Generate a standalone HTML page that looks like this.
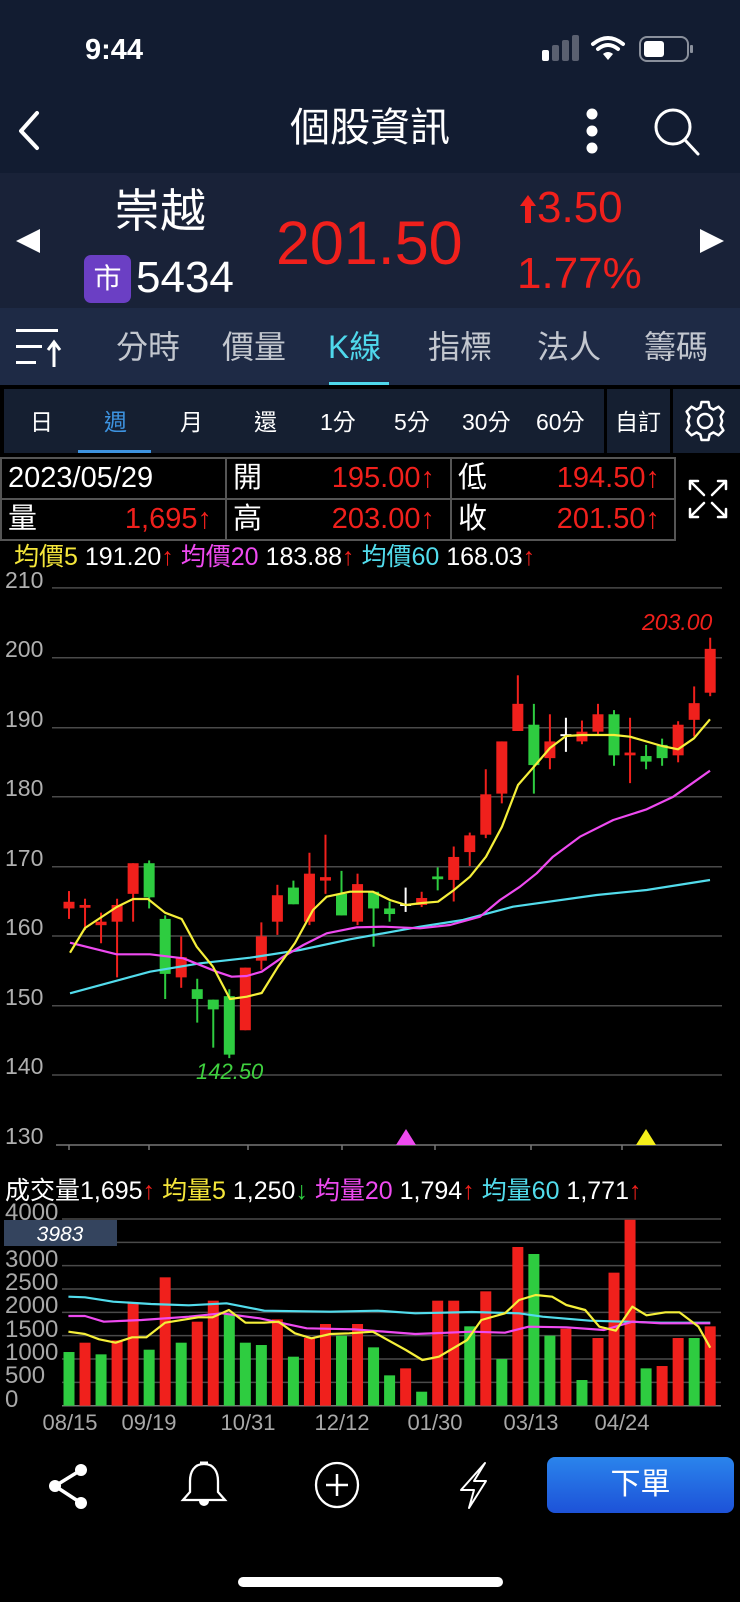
<!DOCTYPE html>
<html><head><meta charset="utf-8">
<style>
*{margin:0;padding:0;box-sizing:border-box}
body{width:740px;height:1602px;background:#000;overflow:hidden;font-family:"Liberation Sans","Noto Sans CJK TC",sans-serif;color:#fff;position:relative}
.a{position:absolute;white-space:nowrap}
.red{color:#f0201c}
</style></head><body>
<div class="a" style="left:0;top:0;width:740px;height:173px;background:#121c31"></div>
<div class="a" style="left:85px;top:34px;font-size:29px;font-weight:bold;line-height:32px">9:44</div>
<svg class="a" style="left:530px;top:30px" width="180" height="40">
<rect x="12" y="20" width="7" height="11" rx="2" fill="#fff"/>
<rect x="22" y="15" width="7" height="16" rx="2" fill="#5a6070"/>
<rect x="32" y="10" width="7" height="21" rx="2" fill="#5a6070"/>
<rect x="42" y="5" width="7" height="26" rx="2" fill="#5a6070"/>
<path d="M63 14 Q78 2 93 14" stroke="#fff" stroke-width="4" fill="none" stroke-linecap="round"/>
<path d="M68 19 Q78 11 88 19" stroke="#fff" stroke-width="4" fill="none" stroke-linecap="round"/>
<path d="M73 24 L78 30 L83 24 Q78 20 73 24Z" fill="#fff"/>
<rect x="110" y="7" width="48" height="24" rx="7" fill="none" stroke="#8a909c" stroke-width="2"/>
<rect x="114" y="11" width="20" height="16" rx="3" fill="#fff"/>
<rect x="160" y="15" width="3" height="8" rx="1" fill="#8a909c"/>
</svg>
<svg class="a" style="left:0;top:100px" width="740" height="60">
<path d="M37 13 L21 31 L37 48" stroke="#fff" stroke-width="4" fill="none" stroke-linecap="round" stroke-linejoin="round"/>
<circle cx="592" cy="14" r="5.5" fill="#fff"/><circle cx="592" cy="31" r="5.5" fill="#fff"/><circle cx="592" cy="48" r="5.5" fill="#fff"/>
<circle cx="673" cy="27" r="17" stroke="#fff" stroke-width="3" fill="none"/>
<path d="M685 40 L698 54" stroke="#fff" stroke-width="3" stroke-linecap="round"/>
</svg>
<div class="a" style="left:270px;top:104px;width:200px;text-align:center;font-size:40px;line-height:48px">個股資訊</div>
<div class="a" style="left:0;top:173px;width:740px;height:135px;background:#192238"></div>
<svg class="a" style="left:0;top:225px" width="740" height="32">
<path d="M16 16 L40 4 L40 28Z" fill="#fff"/><path d="M724 16 L700 4 L700 28Z" fill="#fff"/></svg>
<div class="a" style="left:114px;top:183px;font-size:46px;line-height:56px">崇越</div>
<div class="a" style="left:84px;top:255px;width:47px;height:48px;background:#6b3fc4;border-radius:7px;text-align:center;font-size:28px;line-height:48px">市</div>
<div class="a" style="left:136px;top:254px;font-size:44px;line-height:48px">5434</div>
<div class="a red" style="left:276px;top:210px;font-size:61px;line-height:66px">201.50</div>
<svg class="a" style="left:519px;top:194px" width="18" height="30"><path d="M9 1 L17 12 L12 12 L12 29 L6 29 L6 12 L1 12Z" fill="#f0201c"/></svg>
<div class="a red" style="left:537px;top:184px;font-size:44px;line-height:48px">3.50</div>
<div class="a red" style="left:517px;top:250px;font-size:44px;line-height:48px">1.77%</div>
<div class="a" style="left:0;top:308px;width:740px;height:77px;background:#1e2a45"></div>
<svg class="a" style="left:14px;top:325px" width="50" height="45">
<rect x="2" y="4" width="42" height="3" fill="#fff"/><rect x="2" y="20" width="26" height="3" fill="#fff"/><rect x="2" y="36" width="20" height="3" fill="#fff"/>
<path d="M40 42 L40 18 M34 25 L40 17 L46 25" stroke="#fff" stroke-width="3" fill="none"/></svg>
<div class="a" style="left:116px;top:328px;font-size:32px;line-height:38px;color:#c3c7cf">分時</div>
<div class="a" style="left:222px;top:328px;font-size:32px;line-height:38px;color:#c3c7cf">價量</div>
<div class="a" style="left:328px;top:328px;font-size:32px;line-height:38px;color:#4fd8ec">K線</div>
<div class="a" style="left:428px;top:328px;font-size:32px;line-height:38px;color:#c3c7cf">指標</div>
<div class="a" style="left:537px;top:328px;font-size:32px;line-height:38px;color:#c3c7cf">法人</div>
<div class="a" style="left:644px;top:328px;font-size:32px;line-height:38px;color:#c3c7cf">籌碼</div>
<div class="a" style="left:329px;top:382px;width:60px;height:3px;background:#4fd8ec"></div>
<div class="a" style="left:4px;top:389px;width:600px;height:64px;background:#151f31"></div>
<div class="a" style="left:607px;top:389px;width:63px;height:64px;background:#151f31"></div>
<div class="a" style="left:673px;top:389px;width:67px;height:64px;background:#151f31"></div>
<div class="a" style="top:407px;left:0;width:740px;font-size:23px;line-height:30px">
<span class="a" style="left:30px">日</span><span class="a" style="left:104px;color:#3d93e0">週</span><span class="a" style="left:180px">月</span><span class="a" style="left:254px">還</span><span class="a" style="left:320px">1分</span><span class="a" style="left:394px">5分</span><span class="a" style="left:462px">30分</span><span class="a" style="left:536px">60分</span><span class="a" style="left:615px">自訂</span></div>
<div class="a" style="left:78px;top:450px;width:73px;height:3px;background:#3d93e0"></div>
<svg class="a" style="left:683px;top:399px" width="44" height="44" viewBox="-22 -22 44 44">
<path d="M-3.5 -19 L3.5 -19 L4.6 -13.5 L8.5 -11.4 L13.5 -14.3 L18.4 -9.4 L15.6 -4.5 L17 -0.5 L17 0.5 L15.6 4.5 L18.4 9.4 L13.5 14.3 L8.5 11.4 L4.6 13.5 L3.5 19 L-3.5 19 L-4.6 13.5 L-8.5 11.4 L-13.5 14.3 L-18.4 9.4 L-15.6 4.5 L-17 0 L-15.6 -4.5 L-18.4 -9.4 L-13.5 -14.3 L-8.5 -11.4 L-4.6 -13.5Z" fill="none" stroke="#fff" stroke-width="2.5" stroke-linejoin="round"/>
<circle r="7" fill="none" stroke="#fff" stroke-width="2.5"/></svg>
<svg class="a" style="left:0;top:457px" width="740" height="85">
<g stroke="#555" stroke-width="2" fill="none"><rect x="1" y="1" width="674" height="82"/><line x1="1" y1="42" x2="675" y2="42"/><line x1="226" y1="1" x2="226" y2="83"/><line x1="451" y1="1" x2="451" y2="83"/></g>
<g stroke="#fff" stroke-width="2.5" fill="none" stroke-linecap="round"><path d="M690 24 L704 38 M690 24 L690 32 M690 24 L698 24"/><path d="M726 24 L712 38 M726 24 L726 32 M726 24 L718 24"/><path d="M690 60 L704 46 M690 60 L690 52 M690 60 L698 60"/><path d="M726 60 L712 46 M726 60 L726 52 M726 60 L718 60"/></g>
</svg>
<div class="a" style="top:461px;left:0;font-size:29px;line-height:34px;width:740px">
<span class="a" style="left:8px">2023/05/29</span><span class="a" style="left:233px">開</span><span class="a red" style="right:305px">195.00↑</span><span class="a" style="left:458px">低</span><span class="a red" style="right:80px">194.50↑</span></div>
<div class="a" style="top:502px;left:0;font-size:29px;line-height:34px;width:740px">
<span class="a" style="left:8px">量</span><span class="a red" style="right:528px">1,695↑</span><span class="a" style="left:233px">高</span><span class="a red" style="right:305px">203.00↑</span><span class="a" style="left:458px">收</span><span class="a red" style="right:80px">201.50↑</span></div>
<div class="a" style="left:14px;top:543px;font-size:25px;line-height:28px"><span style="color:#f5e63a">均價5</span> 191.20<span class="red">↑</span> <span style="color:#ee4af0">均價20</span> 183.88<span class="red">↑</span> <span style="color:#52dcec">均價60</span> 168.03<span class="red">↑</span></div>
<div class="a" style="left:5px;top:1176px;font-size:25px;line-height:30px">成交量1,695<span class="red">↑</span> <span style="color:#f5e63a">均量5</span> 1,250<span style="color:#2ecc40">↓</span> <span style="color:#ee4af0">均量20</span> 1,794<span class="red">↑</span> <span style="color:#52dcec">均量60</span> 1,771<span class="red">↑</span></div>
<svg id="ch" class="a" style="left:0;top:0" width="740" height="1602">
<g font-family="Liberation Sans,sans-serif" font-size="23" fill="#b0b0b0">
<text x="5" y="588">210</text><text x="5" y="657">200</text><text x="5" y="727">190</text><text x="5" y="796">180</text><text x="5" y="866">170</text><text x="5" y="935">160</text><text x="5" y="1005">150</text><text x="5" y="1074">140</text><text x="5" y="1144">130</text>
</g>
<g font-family="Liberation Sans,sans-serif" font-size="24" fill="#a8a8a8">
<text x="5" y="1220">4000</text><text x="5" y="1267">3000</text><text x="5" y="1290">2500</text><text x="5" y="1313">2000</text><text x="5" y="1337">1500</text><text x="5" y="1360">1000</text><text x="5" y="1383">500</text><text x="5" y="1407">0</text>
</g>
<g id="grid" stroke="#4a4a4a" stroke-width="1.5"></g>
<g id="vol"></g><g id="vma" fill="none" stroke-width="2.2"></g>
<g id="cand"></g><g id="pma" fill="none" stroke-width="2.2"></g>
<rect x="4" y="1220" width="113" height="26" fill="#34445e"/>
<text x="60" y="1241" text-anchor="middle" font-family="Liberation Sans,sans-serif" font-size="21" font-style="italic" fill="#fff">3983</text>
<text x="642" y="630" font-family="Liberation Sans,sans-serif" font-size="23" font-style="italic" fill="#f0201c">203.00</text>
<text x="196" y="1079" font-family="Liberation Sans,sans-serif" font-size="22" font-style="italic" fill="#3fd13f">142.50</text>
<path d="M396 1145 L406 1129 L416 1145Z" fill="#ee4af0"/>
<path d="M636 1145 L646 1129 L656 1145Z" fill="#f5ef1a"/>
<g font-family="Liberation Sans,sans-serif" font-size="22" fill="#a8a8a8" text-anchor="middle">
<text x="70" y="1430">08/15</text><text x="149" y="1430">09/19</text><text x="248" y="1430">10/31</text><text x="342" y="1430">12/12</text><text x="435" y="1430">01/30</text><text x="531" y="1430">03/13</text><text x="622" y="1430">04/24</text></g>
</svg>
<svg class="a" style="left:0;top:1455px" width="520" height="60">
<g fill="#fff"><circle cx="81" cy="15" r="6"/><circle cx="55" cy="31" r="6"/><circle cx="81" cy="48" r="6"/></g>
<path d="M81 15 L55 31 L81 48" stroke="#fff" stroke-width="3.5" fill="none"/>
<path d="M204 9 C194 9 190 17 190 26 L190 37 L183 45 L225 45 L218 37 L218 26 C218 17 214 9 204 9Z" stroke="#fff" stroke-width="2.3" fill="none"/>
<path d="M200 8 L208 8" stroke="#fff" stroke-width="3"/><path d="M199 46 A5 5 0 0 0 209 46Z" fill="#fff"/>
<ellipse cx="337" cy="30" rx="21" ry="22" stroke="#fff" stroke-width="2.3" fill="none"/>
<path d="M337 19 L337 41 M326 30 L348 30" stroke="#fff" stroke-width="2.5"/>
<path d="M485 8 L461 35 L474 35 L469 53 L486 26 L474 26Z" stroke="#fff" stroke-width="2" fill="none" stroke-linejoin="round"/>
</svg>
<div class="a" style="left:547px;top:1457px;width:187px;height:56px;border-radius:8px;background:linear-gradient(#2a84ec,#1d52d8);text-align:center;font-size:30px;line-height:56px">下單</div>
<div class="a" style="left:238px;top:1577px;width:265px;height:10px;border-radius:5px;background:#fff"></div>
<script>
var NS="http://www.w3.org/2000/svg";
function el(p,t,a){var e=document.createElementNS(NS,t);for(var k in a)e.setAttribute(k,a[k]);document.getElementById(p).appendChild(e);return e;}
var g=[587.9,657.7,727.7,796.7,866.7,936,1005.7,1075,1145];
g.forEach(function(y,i){el("grid","line",{x1:i==8?56:52,y1:y,x2:722,y2:y,stroke:i==8?"#777":"#4a4a4a"});});
[69,149,248,342,435,531,622].forEach(function(x){el("grid","line",{x1:x,y1:1145,x2:x,y2:1150,stroke:"#777"});});
for(var v=0;v<=4000;v+=500){var y=1405.7-v*0.04668;el("grid","line",{x1:62,y1:y,x2:721,y2:y,stroke:v==0?"#777":"#4a4a4a"});}
var vols=[[1150,0],[1350,1],[1100,0],[1400,1],[2200,1],[1200,0],[2750,1],[1350,0],[1800,1],[2250,1],[1950,0],[1350,0],[1300,0],[1850,1],[1050,0],[1450,1],[1750,1],[1500,0],[1750,1],[1250,0],[650,0],[800,1],[300,0],[2250,1],[2250,1],[1700,0],[2450,1],[1000,0],[3400,1],[3250,0],[1500,0],[1650,1],[550,0],[1450,1],[2850,1],[3983,1],[800,0],[850,1],[1450,1],[1450,0],[1700,1]];
var R="#f0201c",G="#2ecc40";
vols.forEach(function(d,i){var x=69+16.03*i;var h=d[0]*0.04668;el("vol","rect",{x:x-5.5,y:1405.7-h,width:11,height:h,fill:d[1]?R:G});});
var C=[[164,164.96,166.5,162.5],[164.1,164.5,165.4,160.9],[161.6,162.1,163.4,159],[162.1,164.5,165.4,154.1],[166.1,170.5,170.5,162.1],[170.5,165.6,170.9,164],[162.5,154.6,163,151],[154.1,157,160,152.6],[152.4,151,153.9,147.6],[150.9,149.5,150.9,144],[151.4,143,152.4,142.5],[146.5,155.5,155.5,146.5],[156.5,160,162,155.2],[162.1,165.9,167.4,160.2],[167,164.6,168,164.6],[162.1,169,172,161.6],[168,168.5,174.6,166.1],[166.1,163,169.4,163],[162.1,167.5,169,161.6],[166.4,164,166.4,158.5],[164,163.2,165,162.1],[164.5,164.5,167,163.5],[164.5,165.5,166.4,164.2],[168.6,168.2,169.9,166.6],[168.1,171.4,172.9,165],[172.1,174.5,174.9,170.1],[174.6,180.4,184,174.1],[180.5,188,188,179.1],[189.5,193.4,197.5,189.5],[190.4,184.6,193.4,180.5],[185.6,188,191.9,184],[188.9,188.9,191.4,186.5],[188,189.4,191,187.6],[189.4,191.9,193.4,189],[191.9,186,192.5,184.5],[186,186.4,191.4,182],[185.9,185.1,187.5,184],[187.5,185.6,188.4,184.5],[186,190.4,190.9,185],[191.1,193.5,195.9,188.7],[195,201.3,202.9,194.5]];
function py(p){return 866.7+(170-p)*6.96;}
C.forEach(function(c,i){var x=69+16.03*i;var o=c[0],cl=c[1];var col=cl>o?R:(cl<o?G:"#fff");
el("cand","line",{x1:x,y1:py(c[2]),x2:x,y2:py(c[3]),stroke:col,"stroke-width":2});
if(cl==o){el("cand","line",{x1:x-5.5,y1:py(o),x2:x+5.5,y2:py(o),stroke:col,"stroke-width":2});}
else{var t=py(Math.max(o,cl)),b=py(Math.min(o,cl));el("cand","rect",{x:x-5.5,y:t,width:11,height:Math.max(b-t,2.5),fill:col});}});
function line(p,pts,col){el(p,"polyline",{points:pts.map(function(q){return q.join(",")}).join(" "),stroke:col,"stroke-linejoin":"round"});}
line("pma",[[70,993.3],[150,971.7],[200,963.3],[250,957.7],[300,950],[350,939.3],[420,926.7],[463,920],[513,906.7],[596.7,895],[646.7,890],[710,880]],"#52dcec");
line("pma",[[70,942.7],[116.7,954.3],[150,954.3],[183.3,958.3],[216.7,971.7],[231.7,976.7],[246.7,976],[261.7,971.7],[283.3,956.7],[303.3,945],[326.7,933.3],[356.7,927.3],[383.3,926.7],[420,928.3],[450,925],[480,916.7],[500,900],[520,886.7],[536.7,873.3],[553,856.7],[580,836.7],[613.3,820],[646.7,809.3],[673.3,796.7],[710,770.7]],"#ee4af0");
line("pma",[[70,952.7],[85,928],[116.7,907],[133,899],[148,899],[165,912.7],[181.7,919],[196.7,946.7],[213,966.7],[230,999],[246.7,996.7],[261.7,993],[278,966.7],[295,943],[313,910],[326.7,896.7],[350,891.7],[373,891.7],[390,900],[406,905],[422,903],[438,901.7],[454,890],[470,876.7],[486,856.7],[502,826.7],[518,785],[534,766.7],[550,748],[566,736],[582,735],[614,735],[630,736.7],[662,746],[678,749.3],[694,738.3],[710,719.3]],"#f5ef3a");
function vl(arr,col){line("vma",arr.map(function(q){return [q[0]/2.119,1160+q[1]/3]}),col);}
vl([[145,410],[180,412],[240,425],[320,432],[400,436],[480,430],[560,452],[700,455],[800,452],[880,460],[1000,456],[1100,460],[1150,470],[1250,482],[1400,488],[1505,488]],"#52dcec");
vl([[145,468],[180,468],[220,485],[300,480],[400,470],[470,460],[550,475],[650,505],[750,508],[880,522],[1000,515],[1070,518],[1120,500],[1200,502],[1280,510],[1340,485],[1400,490],[1505,490]],"#ee4af0");
vl([[145,515],[180,522],[210,538],[245,548],[280,532],[310,532],[350,488],[420,472],[450,472],[485,450],[520,488],[560,488],[590,485],[625,520],[660,535],[700,522],[740,520],[790,515],[860,570],[895,600],[930,590],[990,540],[1020,480],[1070,460],[1100,420],[1135,405],[1170,410],[1200,435],[1240,450],[1270,500],[1305,512],[1340,440],[1370,466],[1410,457],[1440,457],[1480,500],[1505,563]],"#f5ef3a");
</script>
</body></html>
